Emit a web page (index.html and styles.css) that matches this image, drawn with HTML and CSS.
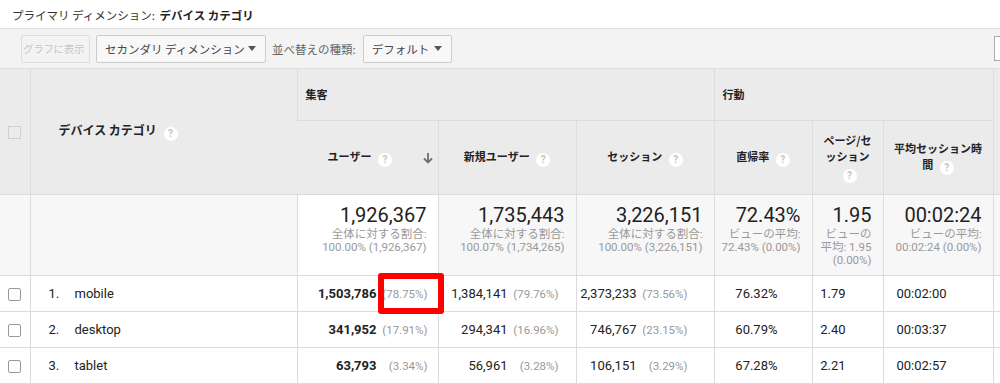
FILE: index.html
```html
<!DOCTYPE html>
<html lang="ja">
<head>
  <meta charset="UTF-8" />
  <meta name="viewport" content="width=device-width, initial-scale=1.0" />
  <title>デバイス カテゴリ | レポート</title>
  <link rel="stylesheet" href="styles.css">
</head>
<body>
  <div class="title">
    プライマリ ディメンション: <b>デバイス カテゴリ</b>
  </div>

  <div class="toolbar">
    <span class="notch"></span>
    <button class="btn disabled">グラフに表示</button>
    <button class="btn select">セカンダリ ディメンション <span class="caret"></span></button>
    <span class="label">並べ替えの種類:</span>
    <button class="btn select small">デフォルト <span class="caret"></span></button>
    <span class="edge-box"></span>
  </div>

  <table class="report">
    <colgroup>
      <col style="width:30px">
      <col style="width:267px">
      <col style="width:141px">
      <col style="width:138px">
      <col style="width:138px">
      <col style="width:98px">
      <col style="width:71px">
      <col style="width:110px">
      <col>
    </colgroup>
    <thead>
      <tr class="group-row">
        <th class="check-col" rowspan="2"><span class="checkbox off"></span></th>
        <th class="dim-head" rowspan="2">デバイス カテゴリ <span class="help">?</span></th>
        <th class="group" colspan="3">集客</th>
        <th class="group" colspan="3">行動</th>
        <th rowspan="2"></th>
      </tr>
      <tr class="metric-row">
        <th>
          <div class="sorted">
            <span class="sorted-label">ユーザー <span class="help">?</span></span>
            <svg class="arrow" width="10" height="12" viewBox="0 0 10 12">
              <path d="M5 1 V10.5 M1 6.5 L5 10.5 L9 6.5" fill="none" stroke="#707070" stroke-width="1.8"/>
            </svg>
          </div>
        </th>
        <th>新規ユーザー <span class="help">?</span></th>
        <th>セッション <span class="help">?</span></th>
        <th>直帰率 <span class="help">?</span></th>
        <th class="narrow">ページ/セ<br>ッション<br><span class="help">?</span></th>
        <th class="narrow">平均セッション時<br>間 <span class="help">?</span></th>
      </tr>
    </thead>
    <tbody>
      <tr class="totals">
        <td class="check-col"></td>
        <td></td>
        <td class="active">
          <div class="big">1,926,367</div>
          <div class="sub">全体に対する割合:<br>100.00% (1,926,367)</div>
        </td>
        <td>
          <div class="big">1,735,443</div>
          <div class="sub">全体に対する割合:<br>100.07% (1,734,265)</div>
        </td>
        <td>
          <div class="big">3,226,151</div>
          <div class="sub">全体に対する割合:<br>100.00% (3,226,151)</div>
        </td>
        <td>
          <div class="big">72.43%</div>
          <div class="sub">ビューの平均:<br>72.43% (0.00%)</div>
        </td>
        <td>
          <div class="big">1.95</div>
          <div class="sub">ビューの<br>平均: 1.95<br>(0.00%)</div>
        </td>
        <td>
          <div class="big">00:02:24</div>
          <div class="sub">ビューの平均:<br>00:02:24 (0.00%)</div>
        </td>
        <td></td>
      </tr>
      <tr class="data">
        <td class="check-col"><span class="checkbox"></span></td>
        <td class="dim"><span class="idx">1.</span>mobile</td>
        <td class="num users marked"><b>1,503,786</b><span class="pct">(78.75%)</span><span class="highlight"></span></td>
        <td class="num new">1,384,141<span class="pct">(79.76%)</span></td>
        <td class="num sess">2,373,233<span class="pct">(73.56%)</span></td>
        <td class="num bounce">76.32%</td>
        <td class="num pages">1.79</td>
        <td class="num time">00:02:00</td>
        <td></td>
      </tr>
      <tr class="data">
        <td class="check-col"><span class="checkbox"></span></td>
        <td class="dim"><span class="idx">2.</span>desktop</td>
        <td class="num users"><b>341,952</b><span class="pct">(17.91%)</span></td>
        <td class="num new">294,341<span class="pct">(16.96%)</span></td>
        <td class="num sess">746,767<span class="pct">(23.15%)</span></td>
        <td class="num bounce">60.79%</td>
        <td class="num pages">2.40</td>
        <td class="num time">00:03:37</td>
        <td></td>
      </tr>
      <tr class="data">
        <td class="check-col"><span class="checkbox"></span></td>
        <td class="dim"><span class="idx">3.</span>tablet</td>
        <td class="num users"><b>63,793</b><span class="pct">(3.34%)</span></td>
        <td class="num new">56,961<span class="pct">(3.28%)</span></td>
        <td class="num sess">106,151<span class="pct">(3.29%)</span></td>
        <td class="num bounce">67.28%</td>
        <td class="num pages">2.21</td>
        <td class="num time">00:02:57</td>
        <td></td>
      </tr>
    </tbody>
  </table>
</body>
</html>
```

FILE: styles.css
```css
body {
  margin: 0;
  width: 1000px;
  overflow: hidden;
  background: #fff;
  color: #222;
  font-family: Roboto, "Noto Sans CJK JP", sans-serif;
}
.title {
  height: 28px;
  line-height: 30px;
  padding-left: 12px;
  font-size: 11.5px;
  color: #333;
  font-family: "Noto Sans CJK JP", sans-serif;
}
.title b { color: #222; margin-left: 2px; }

.toolbar {
  position: relative;
  display: flex;
  align-items: center;
  gap: 6px;
  height: 39px;
  padding: 0 0 0 21px;
  background: #f3f3f3;
  border-top: 1px solid #e2e2e2;
  overflow: hidden;
  font-family: "Noto Sans CJK JP", sans-serif;
}
.notch {
  position: absolute;
  left: 201px;
  top: -5px;
  width: 8px;
  height: 8px;
  background: #f3f3f3;
  border-left: 1px solid #e2e2e2;
  border-top: 1px solid #e2e2e2;
  transform: rotate(45deg);
}
.btn {
  flex: none;
  height: 28px;
  padding: 0 8px;
  border: 1px solid #ccc;
  border-radius: 2px;
  background: #f8f8f8;
  color: #444;
  font-family: inherit;
  font-size: 11.5px;
  white-space: nowrap;
  display: flex;
  align-items: center;
  box-sizing: border-box;
}
.btn.disabled {
  width: 69px;
  padding: 0 1px;
  color: #c6c6c6;
  border-color: #dedede;
  background: #f3f3f3;
  font-size: 10.5px;
  letter-spacing: -0.3px;
  overflow: hidden;
}
.btn.select { width: 170px; justify-content: space-between; padding-right: 9px; }
.btn.select.small { width: 89px; }
.caret {
  width: 0;
  height: 0;
  border-left: 4px solid transparent;
  border-right: 4px solid transparent;
  border-top: 5px solid #555;
}
.label { flex: none; font-size: 11.5px; color: #666; margin-right: 1px; white-space: nowrap; }
.edge-box {
  flex: none;
  margin-left: auto;
  margin-right: -20px;
  width: 24px;
  height: 23px;
  border: 1px solid #aaa;
  background: #fff;
}

.report {
  width: 1000px;
  table-layout: fixed;
  border-collapse: collapse;
  border-top: 1px solid #ddd;
}
.report th,
.report td {
  border-left: 1px solid #dcdcdc;
  border-bottom: 1px solid #dcdcdc;
  padding: 0;
}
.report th:first-child,
.report td:first-child { border-left: none; }

.report thead th {
  background: #ebebeb;
  font-family: "Noto Sans CJK JP", sans-serif;
  font-size: 11px;
  font-weight: bold;
  color: #222;
  line-height: 15px;
}
.group-row { height: 52px; }
.metric-row { height: 74px; }
.group { text-align: left; padding-left: 8px !important; }
.dim-head { text-align: left; padding-left: 28px !important; font-size: 12px !important; }
.metric-row th { text-align: center; }
.narrow { line-height: 16px !important; }

.sorted { display: flex; align-items: center; padding-right: 5px; }
.sorted-label { flex: 1; text-align: center; }
.arrow { display: block; }

.help {
  display: inline-block;
  width: 14px;
  height: 14px;
  margin-left: 4px;
  border-radius: 50%;
  background: #fff;
  color: #c4c4c4;
  font-family: Roboto, sans-serif;
  font-size: 10px;
  font-weight: bold;
  line-height: 14px;
  text-align: center;
  vertical-align: -2px;
}

.check-col { text-align: center; }
.checkbox {
  display: inline-block;
  width: 11px;
  height: 11px;
  border: 1px solid #999;
  border-radius: 2px;
  background: #fff;
  vertical-align: middle;
}
.checkbox.off { border-color: #d0d0d0; background: #ececec; border-radius: 0; }

.totals { height: 81px; background: #f7f7f7; }
.totals td { vertical-align: top; text-align: right; padding: 9px 11px 0 0; }
.totals td.active { background: #fff; }
.big { font-size: 20px; line-height: 23px; color: #222; }
.sub { font-size: 11.5px; line-height: 13px; color: #999; margin-top: 1px; }

.data { height: 36px; }
.data td { font-size: 13px; color: #222; vertical-align: middle; }
.dim { padding-left: 18px !important; }
.idx { display: inline-block; width: 26px; }
.num { text-align: right; }
.pct {
  display: inline-block;
  width: 51px;
  text-align: right;
  font-size: 11.5px;
  color: #999;
}
.users { padding-right: 10px !important; }
.new { padding-right: 17px !important; }
.sess { padding-right: 26px !important; }
.bounce { padding-right: 34px !important; }
.pages { padding-right: 37px !important; }
.time { padding-right: 46px !important; }

.marked { position: relative; }
.highlight {
  position: absolute;
  left: 80px;
  top: -3px;
  width: 66px;
  height: 41px;
  box-sizing: border-box;
  border: 6px solid #f00;
  border-radius: 3px;
}
```
